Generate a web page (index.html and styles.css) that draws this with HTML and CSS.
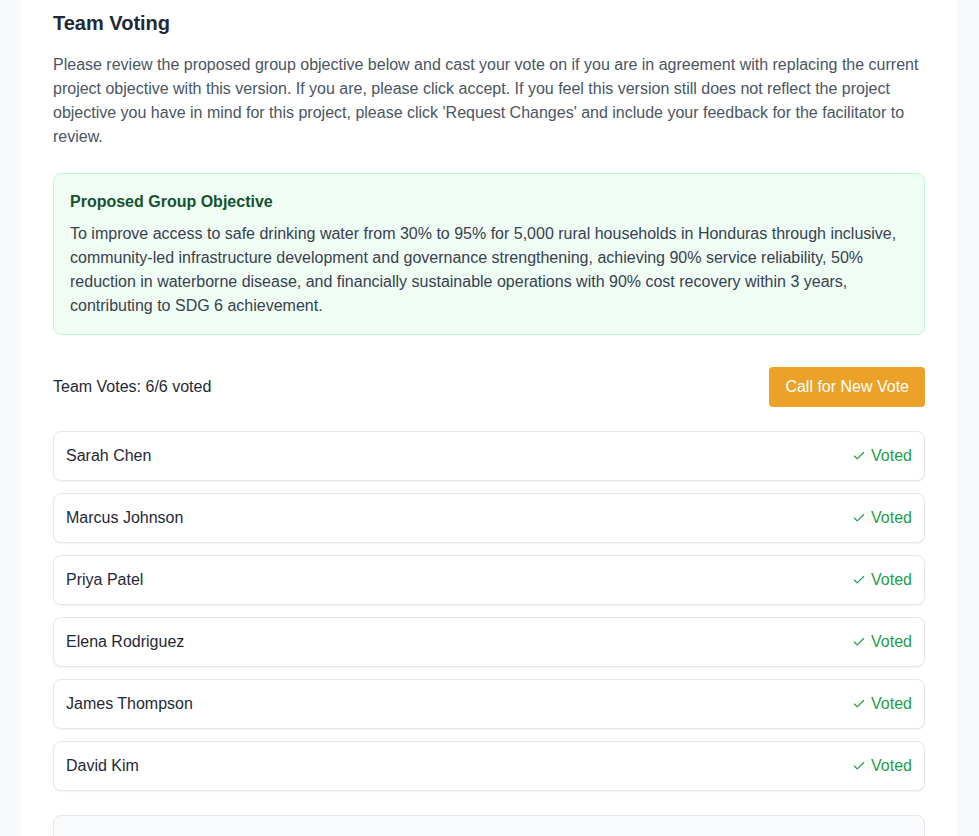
FILE: index.html
```html
<!DOCTYPE html>
<html lang="en">
<head>
<meta charset="utf-8">
<title>Team Voting</title>
<link rel="stylesheet" href="styles.css">
</head>
<body>
<main class="panel">
  <h2 class="title">Team Voting</h2>
  <p class="intro">Please review the proposed group objective below and cast your vote on if you are in agreement with replacing the current project objective with this version. If you are, please click accept. If you feel this version still does not reflect the project objective you have in mind for this project, please click 'Request Changes' and include your feedback for the facilitator to review.</p>

  <section class="objective">
    <h3 class="objective-title">Proposed Group Objective</h3>
    <p class="objective-text">To improve access to safe drinking water from 30% to 95% for 5,000 rural households in Honduras through inclusive, community-led infrastructure development and governance strengthening, achieving 90% service reliability, 50% reduction in waterborne disease, and financially sustainable operations with 90% cost recovery within 3 years, contributing to SDG 6 achievement.</p>
  </section>

  <div class="votes-head">
    <span class="votes-count">Team Votes: 6/6 voted</span>
    <button class="btn-vote" type="button">Call for New Vote</button>
  </div>

  <ul class="members">
    <li class="member"><span class="name">Sarah Chen</span><span class="status"><svg class="check" viewBox="0 0 24 24" width="14" height="14"><polyline points="20 6 9 17 4 12"/></svg>Voted</span></li>
    <li class="member"><span class="name">Marcus Johnson</span><span class="status"><svg class="check" viewBox="0 0 24 24" width="14" height="14"><polyline points="20 6 9 17 4 12"/></svg>Voted</span></li>
    <li class="member"><span class="name">Priya Patel</span><span class="status"><svg class="check" viewBox="0 0 24 24" width="14" height="14"><polyline points="20 6 9 17 4 12"/></svg>Voted</span></li>
    <li class="member"><span class="name">Elena Rodriguez</span><span class="status"><svg class="check" viewBox="0 0 24 24" width="14" height="14"><polyline points="20 6 9 17 4 12"/></svg>Voted</span></li>
    <li class="member"><span class="name">James Thompson</span><span class="status"><svg class="check" viewBox="0 0 24 24" width="14" height="14"><polyline points="20 6 9 17 4 12"/></svg>Voted</span></li>
    <li class="member"><span class="name">David Kim</span><span class="status"><svg class="check" viewBox="0 0 24 24" width="14" height="14"><polyline points="20 6 9 17 4 12"/></svg>Voted</span></li>
  </ul>

  <section class="footer-box"></section>
</main>
</body>
</html>
```

FILE: styles.css
```css
* { box-sizing: border-box; }
html, body {
  margin: 0;
  background: #f8f9fb;
  font-family: "Liberation Sans", Arial, sans-serif;
  color: #1f2937;
}
body { height: 836px; overflow: hidden; }
.panel {
  width: 936px;
  margin-left: 21px;
  background: #ffffff;
  padding: 9px 32px 40px;
  min-height: 100%;
}
.title {
  margin: 0;
  font-size: 20px;
  line-height: 28px;
  font-weight: 700;
  color: #1f2937;
}
.intro {
  margin: 16px 0 0;
  font-size: 16px;
  line-height: 24px;
  color: #4b5563;
}
.objective {
  margin-top: 24px;
  background: #f0fdf4;
  border: 1px solid #bbf7d0;
  border-radius: 8px;
  padding: 16px;
}
.objective-title {
  margin: 0 0 8px;
  font-size: 16px;
  line-height: 24px;
  font-weight: 700;
  color: #14532d;
}
.objective-text {
  margin: 0;
  font-size: 16px;
  line-height: 24px;
  color: #374151;
}
.votes-head {
  margin-top: 32px;
  display: flex;
  align-items: center;
  justify-content: space-between;
}
.votes-count {
  font-size: 16px;
  line-height: 24px;
  color: #1f2937;
}
.btn-vote {
  height: 40px;
  padding: 0 16px;
  border: none;
  border-radius: 4px;
  background: #eca228;
  color: #ffffff;
  font-family: inherit;
  font-size: 16px;
}
.members {
  list-style: none;
  margin: 24px 0 0;
  padding: 0;
  display: flex;
  flex-direction: column;
  gap: 12px;
}
.member {
  display: flex;
  align-items: center;
  justify-content: space-between;
  padding: 12px;
  border: 1px solid #e5e7eb;
  border-radius: 8px;
  background: #ffffff;
  box-shadow: 0 1px 2px rgba(0, 0, 0, 0.05);
  font-size: 16px;
  line-height: 24px;
}
.name { color: #1f2937; }
.status {
  display: flex;
  align-items: center;
  gap: 5px;
  color: #1f9d48;
}
.check {
  fill: none;
  stroke: #1f9d48;
  stroke-width: 2;
  stroke-linecap: round;
  stroke-linejoin: round;
}
.footer-box {
  margin-top: 24px;
  height: 140px;
  background: #f9fafb;
  border: 1px solid #e5e7eb;
  border-radius: 8px;
}
```
